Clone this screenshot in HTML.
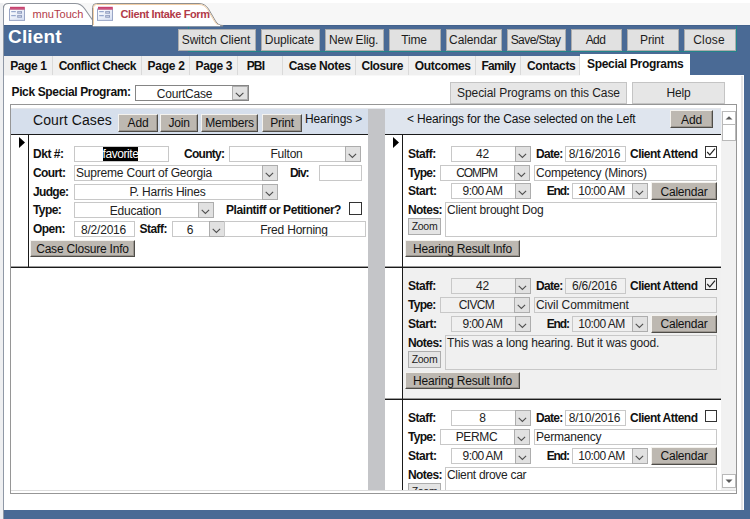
<!DOCTYPE html>
<html><head><meta charset="utf-8"><title>Client Intake Form</title>
<style>
html,body{margin:0;padding:0;}
body{width:750px;height:519px;overflow:hidden;position:relative;background:#f0f0f0;font-family:"Liberation Sans",Arial,sans-serif;font-size:12px;color:#000;}
.a{position:absolute;box-sizing:border-box;white-space:nowrap;}
.f{display:inline-block;}
.lbl{font-weight:bold;font-size:12px;line-height:14px;color:#111;letter-spacing:-0.45px;}
.txt{font-size:12px;line-height:14px;color:#111;letter-spacing:-0.2px;}
.big{font-size:14px;line-height:18px;color:#111;}
.title{font-weight:bold;font-size:19px;line-height:26px;color:#fff;}
.doctab{font-size:11px;line-height:14px;color:#b23a48;z-index:3;}
.hbtn{background:#e1e1e1;border:1px solid #adadad;text-align:center;font-size:12px;color:#1c1c1c;padding-right:2px;}
.hbtn2{background:#e6e6e6;border:1px solid #c4c4c4;text-align:center;font-size:12px;color:#1c1c1c;letter-spacing:-0.2px;}
.btn{background:#bdb8b1;border:1px solid;border-color:#f4f2ee #4e4c48 #4e4c48 #f4f2ee;box-shadow:inset -1px -1px 0 #9b968f;text-align:center;font-size:12px;color:#111;letter-spacing:-0.2px;}
.zbtn{background:#e4e4e4;border:1px solid #adadad;text-align:center;font-size:10.5px;color:#222;}
.tb{border:1px solid #c8c8c8;font-size:12px;line-height:15px;color:#222;overflow:hidden;padding:0 1px;letter-spacing:-0.2px;}
.dd{background:#e1e1e1;border:1px solid #adadad;}
.dd svg{position:absolute;left:-1px;top:-1px;}
.hl{background:#000;color:#fff;padding:0;letter-spacing:-0.45px;}
.chk{border:1px solid #333;}
.sbb{background:#fff;border:1px solid #b9b9b9;}
.sbb svg{position:absolute;left:0;top:0;}
</style></head>
<body>
<div class="a " style="left:0px;top:0px;width:750px;height:25px;background:#f7f7f7;"></div>
<div class="a " style="left:0px;top:0px;width:750px;height:3px;background:#fff;"></div>
<svg class="a" style="left:0;top:0;z-index:2" width="260" height="27" viewBox="0 0 260 27">
<path d="M4 25 V7.5 Q4 3.5 8.5 3.5 H75 Q81 3.5 84.5 8.5 L93 21 V25 Z" fill="#fff"/>
<path d="M3.5 8 Q3.5 3.5 8.5 3.5 H75 Q81 3.5 84.5 8.5 L92.5 20" fill="none" stroke="#8f949c" stroke-width="1.1"/>
<path d="M92.5 26 V7.5 Q92.5 3.5 96.5 3.5 H199 Q205 3.5 208.5 9 L215.5 21 Q218 25.5 223 25.5 V26 Z" fill="#fff" stroke="#8f8f8f" stroke-width="1"/>
<path d="M93.5 26 V7.5 Q93.5 4.5 96.5 4.5 H199 Q204.5 4.5 207.6 9.5 L214.6 21.5 Q216 24 218 25" fill="none" stroke="#f3cfa6" stroke-width="1"/>
<rect x="93" y="25" width="127" height="1.2" fill="#fff"/>
</svg>
<svg class="a" style="left:9px;top:6px;z-index:3" width="16" height="15" viewBox="0 0 16 15">
<defs><linearGradient id="g9" x1="0" y1="0" x2="1" y2="1"><stop offset="0" stop-color="#fff"/><stop offset="1" stop-color="#d5def2"/></linearGradient></defs>
<rect x="0.5" y="3" width="15" height="11.4" fill="url(#g9)" stroke="#9aa6c6" stroke-width="1"/>
<rect x="1" y="0.8" width="14.8" height="2.7" fill="#c7426f"/>
<rect x="1" y="2.6" width="14.8" height="0.9" fill="#d56f92"/>
<rect x="2.2" y="5.1" width="4.6" height="1.1" fill="#8da0c8"/><rect x="2.2" y="9.1" width="4.6" height="1.1" fill="#8da0c8"/>
<rect x="8.2" y="5.1" width="4.8" height="2.6" fill="#8f9cbe"/><rect x="9.2" y="5.9" width="2.8" height="1" fill="#c4cde2"/>
<rect x="8.2" y="9.1" width="4.8" height="2.6" fill="#8f9cbe"/><rect x="9.2" y="9.9" width="2.8" height="1" fill="#c4cde2"/>
</svg>
<svg class="a" style="left:97px;top:6px;z-index:3" width="16" height="15" viewBox="0 0 16 15">
<defs><linearGradient id="g97" x1="0" y1="0" x2="1" y2="1"><stop offset="0" stop-color="#fff"/><stop offset="1" stop-color="#d5def2"/></linearGradient></defs>
<rect x="0.5" y="3" width="15" height="11.4" fill="url(#g97)" stroke="#9aa6c6" stroke-width="1"/>
<rect x="1" y="0.8" width="14.8" height="2.7" fill="#c7426f"/>
<rect x="1" y="2.6" width="14.8" height="0.9" fill="#d56f92"/>
<rect x="2.2" y="5.1" width="4.6" height="1.1" fill="#8da0c8"/><rect x="2.2" y="9.1" width="4.6" height="1.1" fill="#8da0c8"/>
<rect x="8.2" y="5.1" width="4.8" height="2.6" fill="#8f9cbe"/><rect x="9.2" y="5.9" width="2.8" height="1" fill="#c4cde2"/>
<rect x="8.2" y="9.1" width="4.8" height="2.6" fill="#8f9cbe"/><rect x="9.2" y="9.9" width="2.8" height="1" fill="#c4cde2"/>
</svg>
<div class="a doctab" style="left:32.5px;top:7px;"><span class="f " style="letter-spacing:0.03px">mnuTouch</span></div>
<div class="a doctab" style="left:120.5px;top:7px;font-weight:bold;"><span class="f " style="letter-spacing:-0.38px">Client Intake Form</span></div>
<div class="a " style="left:4px;top:25px;width:746px;height:494px;background:#4a6a95;"></div>
<div class="a " style="left:0px;top:3px;width:3px;height:516px;background:#eeeff1;"></div>
<div class="a " style="left:3px;top:6px;width:1px;height:513px;background:#8f98a6;"></div>
<div class="a title" style="left:8px;top:24px;"><span class="f " style="letter-spacing:0.16px">Client</span></div>
<div class="a " style="left:188px;top:26px;width:549px;height:26px;border:1px solid #23858a;border-top:none;"></div>
<div class="a " style="left:4px;top:25px;width:746px;height:1px;background:#43628c;"></div>
<div class="a hbtn" style="left:178px;top:29px;width:78px;height:22px;line-height:20px;"><span class="f " style="letter-spacing:-0.08px">Switch Client</span></div>
<div class="a hbtn" style="left:261px;top:29px;width:59px;height:22px;line-height:20px;"><span class="f " style="letter-spacing:-0.07px">Duplicate</span></div>
<div class="a hbtn" style="left:325px;top:29px;width:59px;height:22px;line-height:20px;"><span class="f " style="letter-spacing:-0.17px">New Elig.</span></div>
<div class="a hbtn" style="left:389px;top:29px;width:52px;height:22px;line-height:20px;"><span class="f " style="letter-spacing:-0.14px">Time</span></div>
<div class="a hbtn" style="left:446px;top:29px;width:56px;height:22px;line-height:20px;"><span class="f " style="letter-spacing:-0.11px">Calendar</span></div>
<div class="a hbtn" style="left:507px;top:29px;width:59px;height:22px;line-height:20px;"><span class="f " style="letter-spacing:-0.55px">Save/Stay</span></div>
<div class="a hbtn" style="left:571px;top:29px;width:51px;height:22px;line-height:20px;"><span class="f " style="letter-spacing:-0.58px">Add</span></div>
<div class="a hbtn" style="left:627px;top:29px;width:52px;height:22px;line-height:20px;"><span class="f " style="letter-spacing:-0.17px">Print</span></div>
<div class="a hbtn" style="left:684px;top:29px;width:52px;height:22px;line-height:20px;"><span class="f " style="letter-spacing:0.18px">Close</span></div>
<div class="a " style="left:4px;top:56px;width:686px;height:20px;background:#f0f0f0;"></div>
<div class="a " style="left:4px;top:75px;width:686px;height:1px;background:#f8f8f8;"></div>
<div class="a " style="left:52px;top:56px;width:1px;height:19px;background:#dadada;"></div>
<div class="a " style="left:141px;top:56px;width:1px;height:19px;background:#dadada;"></div>
<div class="a " style="left:189px;top:56px;width:1px;height:19px;background:#dadada;"></div>
<div class="a " style="left:237px;top:56px;width:1px;height:19px;background:#dadada;"></div>
<div class="a " style="left:282px;top:56px;width:1px;height:19px;background:#dadada;"></div>
<div class="a " style="left:355px;top:56px;width:1px;height:19px;background:#dadada;"></div>
<div class="a " style="left:408px;top:56px;width:1px;height:19px;background:#dadada;"></div>
<div class="a " style="left:475px;top:56px;width:1px;height:19px;background:#dadada;"></div>
<div class="a " style="left:520px;top:56px;width:1px;height:19px;background:#dadada;"></div>
<div class="a " style="left:579px;top:56px;width:1px;height:19px;background:#dadada;"></div>
<div class="a lbl" style="left:10.2px;top:59px;"><span class="f " style="letter-spacing:-0.40px">Page 1</span></div>
<div class="a lbl" style="left:58.7px;top:59px;"><span class="f " style="letter-spacing:-0.48px">Conflict Check</span></div>
<div class="a lbl" style="left:147.5px;top:59px;"><span class="f " style="letter-spacing:-0.24px">Page 2</span></div>
<div class="a lbl" style="left:195.5px;top:59px;"><span class="f " style="letter-spacing:-0.34px">Page 3</span></div>
<div class="a lbl" style="left:246.7px;top:59px;"><span class="f " style="letter-spacing:-0.86px">PBI</span></div>
<div class="a lbl" style="left:288.8px;top:59px;"><span class="f " style="letter-spacing:-0.36px">Case Notes</span></div>
<div class="a lbl" style="left:361.5px;top:59px;"><span class="f " style="letter-spacing:-0.45px">Closure</span></div>
<div class="a lbl" style="left:414.8px;top:59px;"><span class="f " style="letter-spacing:-0.36px">Outcomes</span></div>
<div class="a lbl" style="left:481.5px;top:59px;"><span class="f " style="letter-spacing:-0.74px">Family</span></div>
<div class="a lbl" style="left:527.0px;top:59px;"><span class="f " style="letter-spacing:-0.38px">Contacts</span></div>
<div class="a " style="left:4px;top:76px;width:740px;height:434px;background:#fff;"></div>
<div class="a " style="left:690px;top:75px;width:54px;height:1px;background:#fff;"></div>
<div class="a " style="left:741px;top:76px;width:2px;height:434px;background:#e6e6e6;"></div>
<div class="a " style="left:580px;top:54px;width:110px;height:22px;background:#fff;"></div>
<div class="a lbl" style="left:587px;top:57px;"><span class="f " style="letter-spacing:-0.31px">Special Programs</span></div>
<div class="a lbl" style="left:11.5px;top:85px;"><span class="f " style="letter-spacing:-0.36px">Pick Special Program:</span></div>
<div class="a tb" style="left:135px;top:85px;width:114px;height:16px;text-align:center;padding-right:16px;padding-top:1px;border-color:#858585;"><span>CourtCase</span></div>
<div class="a dd" style="left:232px;top:86px;width:16px;height:14px;"><svg width="16" height="14" viewBox="0 0 16 14"><path d="M3.8 6.8 L7.6 10.4 L11.4 6.8" fill="none" stroke="#4a4a4a" stroke-width="1.1"/></svg></div>
<div class="a hbtn2" style="left:450px;top:82px;width:177px;height:22px;line-height:20px;"><span class="f " style="letter-spacing:-0.06px">Special Programs on this Case</span></div>
<div class="a hbtn2" style="left:632px;top:82px;width:93px;height:22px;line-height:20px;">Help</div>
<div class="a " style="left:10px;top:104px;width:727px;height:390px;border:1px solid #969696;background:#fff;"></div>
<div class="a " style="left:11px;top:490px;width:725px;height:1px;background:#dcdcdc;"></div>
<div class="a " style="left:11px;top:108px;width:725px;height:1px;background:#e4e6ea;"></div>
<div class="a " style="left:11px;top:109px;width:358px;height:25px;background:#d6dfec;"></div>
<div class="a " style="left:11px;top:134px;width:358px;height:1px;background:#1a1a1a;"></div>
<div class="a big" style="left:33px;top:111px;"><span class="f " style="letter-spacing:0.10px">Court Cases</span></div>
<div class="a btn" style="left:118px;top:114px;width:40px;height:18px;line-height:17px;">Add</div>
<div class="a btn" style="left:160px;top:114px;width:38px;height:18px;line-height:17px;">Join</div>
<div class="a btn" style="left:201px;top:114px;width:57px;height:18px;line-height:17px;">Members</div>
<div class="a btn" style="left:262px;top:114px;width:40px;height:18px;line-height:17px;">Print</div>
<div class="a txt" style="left:305px;top:112px;"><span class="f " style="letter-spacing:-0.12px">Hearings &gt;</span></div>
<svg class="a" style="left:19px;top:137px" width="6" height="11" viewBox="0 0 6 11"><path d="M0 0 L6 5.5 L0 11 Z" fill="#000"/></svg>
<div class="a " style="left:28px;top:135px;width:1px;height:133px;background:#1a1a1a;"></div>
<div class="a " style="left:11px;top:266px;width:358px;height:1px;background:rgba(40,40,40,0.45);"></div>
<div class="a " style="left:11px;top:267px;width:358px;height:1px;background:#1a1a1a;"></div>
<div class="a lbl" style="left:33px;top:147px;"><span class="f " style="letter-spacing:-0.47px">Dkt #:</span></div>
<div class="a tb" style="left:74px;top:146px;width:95px;height:16px;text-align:center;background:#fff;padding-right:3px;"><span><span class="hl">favorite</span></span></div>
<div class="a lbl" style="left:184px;top:147px;"><span class="f " style="letter-spacing:-0.72px">County:</span></div>
<div class="a tb" style="left:229px;top:146px;width:132px;height:16px;text-align:center;padding-right:18px;background:#fff;padding-top:0px;"><span>Fulton</span></div><div class="a dd" style="left:345px;top:146px;width:16px;height:16px;"><svg width="16" height="16" viewBox="0 0 16 16"><path d="M3.7 7.8 L7.4 11.5 L11.1 7.8" fill="none" stroke="#505050" stroke-width="1.1"/></svg></div>
<div class="a lbl" style="left:33px;top:166px;"><span class="f " style="letter-spacing:-0.60px">Court:</span></div>
<div class="a tb" style="left:74px;top:165px;width:204px;height:16px;text-align:left;padding-right:16px;background:#fff;padding-top:0px;"><span>Supreme Court of Georgia</span></div><div class="a dd" style="left:262px;top:165px;width:16px;height:16px;"><svg width="16" height="16" viewBox="0 0 16 16"><path d="M3.7 7.8 L7.4 11.5 L11.1 7.8" fill="none" stroke="#505050" stroke-width="1.1"/></svg></div>
<div class="a lbl" style="left:290px;top:166px;"><span class="f " style="letter-spacing:-1.06px">Div:</span></div>
<div class="a tb" style="left:319px;top:165px;width:43px;height:16px;text-align:center;background:#fff;padding-right:3px;"><span></span></div>
<div class="a lbl" style="left:33px;top:185px;"><span class="f " style="letter-spacing:-0.67px">Judge:</span></div>
<div class="a tb" style="left:74px;top:184px;width:204px;height:16px;text-align:center;padding-right:18px;background:#fff;padding-top:0px;"><span>P. Harris Hines</span></div><div class="a dd" style="left:262px;top:184px;width:16px;height:16px;"><svg width="16" height="16" viewBox="0 0 16 16"><path d="M3.7 7.8 L7.4 11.5 L11.1 7.8" fill="none" stroke="#505050" stroke-width="1.1"/></svg></div>
<div class="a lbl" style="left:33px;top:203px;"><span class="f " style="letter-spacing:-0.59px">Type:</span></div>
<div class="a tb" style="left:74px;top:202px;width:140px;height:16px;text-align:center;padding-right:18px;background:#fff;padding-top:1px;"><span>Education</span></div><div class="a dd" style="left:198px;top:202px;width:16px;height:16px;"><svg width="16" height="16" viewBox="0 0 16 16"><path d="M3.7 7.8 L7.4 11.5 L11.1 7.8" fill="none" stroke="#505050" stroke-width="1.1"/></svg></div>
<div class="a lbl" style="left:226px;top:203px;"><span class="f " style="letter-spacing:-0.43px">Plaintiff or Petitioner?</span></div>
<div class="a chk" style="left:349px;top:202px;width:13px;height:13px;background:#fff;"></div>
<div class="a lbl" style="left:33px;top:222px;"><span class="f " style="letter-spacing:-0.54px">Open:</span></div>
<div class="a tb" style="left:74px;top:221px;width:61px;height:16px;text-align:center;background:#fff;padding-right:3px;padding-top:1px;"><span>8/2/2016</span></div>
<div class="a lbl" style="left:139.5px;top:222px;"><span class="f " style="letter-spacing:-0.53px">Staff:</span></div>
<div class="a tb" style="left:172px;top:221px;width:53px;height:16px;text-align:center;padding-right:18px;background:#fff;padding-top:1px;"><span>6</span></div><div class="a dd" style="left:209px;top:221px;width:16px;height:16px;"><svg width="16" height="16" viewBox="0 0 16 16"><path d="M3.7 7.8 L7.4 11.5 L11.1 7.8" fill="none" stroke="#505050" stroke-width="1.1"/></svg></div>
<div class="a tb" style="left:224px;top:221px;width:142px;height:16px;text-align:center;background:#fff;padding-right:3px;padding-top:1px;"><span>Fred Horning</span></div>
<div class="a btn" style="left:30px;top:240px;width:105px;height:17px;line-height:16px;">Case Closure Info</div>
<div class="a " style="left:368px;top:109px;width:17px;height:381px;background:#c4c5c8;"></div>
<div class="a " style="left:385px;top:109px;width:336px;height:25px;background:#dfe5ee;"></div>
<div class="a " style="left:385px;top:134px;width:336px;height:1px;background:#1a1a1a;"></div>
<div class="a txt" style="left:407px;top:112px;"><span class="f " style="letter-spacing:-0.15px">&lt; Hearings for the Case selected on the Left</span></div>
<div class="a btn" style="left:670px;top:110px;width:43px;height:18px;line-height:18px;">Add</div>
<svg class="a" style="left:393px;top:137px" width="6" height="11" viewBox="0 0 6 11"><path d="M0 0 L6 5.5 L0 11 Z" fill="#000"/></svg>
<div class="a" style="left:0;top:135px;width:750px;height:132px;overflow:hidden"><div class="a" style="left:0;top:0"><div class="a " style="left:403px;top:0px;width:318px;height:132px;background:#fff;"></div><div class="a " style="left:402px;top:0px;width:1px;height:132px;background:#1a1a1a;"></div><div class="a lbl" style="left:408px;top:12px;"><span class="f " style="letter-spacing:-0.48px">Staff:</span></div><div class="a tb" style="left:451px;top:11px;width:80px;height:16px;text-align:center;padding-right:18px;background:#fff;padding-top:0px;"><span>42</span></div><div class="a dd" style="left:515px;top:11px;width:16px;height:16px;"><svg width="16" height="16" viewBox="0 0 16 16"><path d="M3.7 7.8 L7.4 11.5 L11.1 7.8" fill="none" stroke="#505050" stroke-width="1.1"/></svg></div><div class="a lbl" style="left:536px;top:12px;"><span class="f " style="letter-spacing:-0.69px">Date:</span></div><div class="a tb" style="left:565px;top:11px;width:61px;height:16px;text-align:center;background:#fff;padding-right:3px;"><span>8/16/2016</span></div><div class="a lbl" style="left:630px;top:12px;"><span class="f " style="letter-spacing:-0.52px">Client Attend</span></div><div class="a chk" style="left:705px;top:11px;width:12px;height:12px;background:#fff;"><svg width="12" height="12" viewBox="0 0 12 12" style="position:absolute;left:-1px;top:-1px"><path d="M2.2 6 L4.8 8.8 L10 2.6" fill="none" stroke="#222" stroke-width="1.2"/></svg></div><div class="a lbl" style="left:408px;top:31px;"><span class="f " style="letter-spacing:-0.72px">Type:</span></div><div class="a tb" style="left:440px;top:30px;width:90px;height:16px;text-align:center;padding-right:18px;background:#fff;padding-top:0px;"><span><span class="f " style="letter-spacing:-1.05px">COMPM</span></span></div><div class="a dd" style="left:514px;top:30px;width:16px;height:16px;"><svg width="16" height="16" viewBox="0 0 16 16"><path d="M3.7 7.8 L7.4 11.5 L11.1 7.8" fill="none" stroke="#505050" stroke-width="1.1"/></svg></div><div class="a tb" style="left:534px;top:30px;width:183px;height:16px;text-align:left;background:#fff;padding-right:1px;"><span>Competency (Minors)</span></div><div class="a lbl" style="left:408px;top:49px;"><span class="f " style="letter-spacing:-0.47px">Start:</span></div><div class="a tb" style="left:451px;top:48px;width:80px;height:16px;text-align:center;padding-right:18px;background:#fff;padding-top:0px;"><span><span class="f " style="letter-spacing:-0.61px">9:00 AM</span></span></div><div class="a dd" style="left:515px;top:48px;width:16px;height:16px;"><svg width="16" height="16" viewBox="0 0 16 16"><path d="M3.7 7.8 L7.4 11.5 L11.1 7.8" fill="none" stroke="#505050" stroke-width="1.1"/></svg></div><div class="a lbl" style="left:546.75px;top:49px;"><span class="f " style="letter-spacing:-1.14px">End:</span></div><div class="a tb" style="left:572px;top:48px;width:76px;height:16px;text-align:center;padding-right:18px;background:#fff;padding-top:0px;"><span><span class="f " style="letter-spacing:-0.53px">10:00 AM</span></span></div><div class="a dd" style="left:632px;top:48px;width:16px;height:16px;"><svg width="16" height="16" viewBox="0 0 16 16"><path d="M3.7 7.8 L7.4 11.5 L11.1 7.8" fill="none" stroke="#505050" stroke-width="1.1"/></svg></div><div class="a btn" style="left:651px;top:47px;width:66px;height:18px;line-height:19px;">Calendar</div><div class="a lbl" style="left:408px;top:68px;"><span class="f " style="letter-spacing:-0.57px">Notes:</span></div><div class="a tb" style="left:445px;top:67px;width:272px;height:35px;text-align:left;background:#fff;padding-right:1px;line-height:15px;"><span>Client brought Dog</span></div><div class="a zbtn" style="left:408px;top:83px;width:33px;height:17px;line-height:15px;"><span class="f " style="letter-spacing:-0.28px">Zoom</span></div><div class="a btn" style="left:405px;top:105px;width:115px;height:17px;line-height:16px;">Hearing Result Info</div></div></div>
<div class="a" style="left:0;top:267px;width:750px;height:132px;overflow:hidden"><div class="a" style="left:0;top:0"><div class="a " style="left:403px;top:0px;width:318px;height:132px;background:#f0f0f0;"></div><div class="a " style="left:402px;top:0px;width:1px;height:132px;background:#1a1a1a;"></div><div class="a lbl" style="left:408px;top:12px;"><span class="f " style="letter-spacing:-0.48px">Staff:</span></div><div class="a tb" style="left:451px;top:11px;width:80px;height:16px;text-align:center;padding-right:18px;background:#f0f0f0;padding-top:0px;"><span>42</span></div><div class="a dd" style="left:515px;top:11px;width:16px;height:16px;"><svg width="16" height="16" viewBox="0 0 16 16"><path d="M3.7 7.8 L7.4 11.5 L11.1 7.8" fill="none" stroke="#505050" stroke-width="1.1"/></svg></div><div class="a lbl" style="left:536px;top:12px;"><span class="f " style="letter-spacing:-0.69px">Date:</span></div><div class="a tb" style="left:565px;top:11px;width:61px;height:16px;text-align:center;background:#f0f0f0;padding-right:3px;"><span>6/6/2016</span></div><div class="a lbl" style="left:630px;top:12px;"><span class="f " style="letter-spacing:-0.52px">Client Attend</span></div><div class="a chk" style="left:705px;top:11px;width:12px;height:12px;background:#f0f0f0;"><svg width="12" height="12" viewBox="0 0 12 12" style="position:absolute;left:-1px;top:-1px"><path d="M2.2 6 L4.8 8.8 L10 2.6" fill="none" stroke="#222" stroke-width="1.2"/></svg></div><div class="a lbl" style="left:408px;top:31px;"><span class="f " style="letter-spacing:-0.72px">Type:</span></div><div class="a tb" style="left:440px;top:30px;width:90px;height:16px;text-align:center;padding-right:18px;background:#f0f0f0;padding-top:0px;"><span><span class="f " style="letter-spacing:-0.67px">CIVCM</span></span></div><div class="a dd" style="left:514px;top:30px;width:16px;height:16px;"><svg width="16" height="16" viewBox="0 0 16 16"><path d="M3.7 7.8 L7.4 11.5 L11.1 7.8" fill="none" stroke="#505050" stroke-width="1.1"/></svg></div><div class="a tb" style="left:534px;top:30px;width:183px;height:16px;text-align:left;background:#f0f0f0;padding-right:1px;"><span><span class="f " style="letter-spacing:-0.07px">Civil Commitment</span></span></div><div class="a lbl" style="left:408px;top:50px;"><span class="f " style="letter-spacing:-0.47px">Start:</span></div><div class="a tb" style="left:451px;top:49px;width:80px;height:16px;text-align:center;padding-right:18px;background:#f0f0f0;padding-top:0px;"><span><span class="f " style="letter-spacing:-0.61px">9:00 AM</span></span></div><div class="a dd" style="left:515px;top:49px;width:16px;height:16px;"><svg width="16" height="16" viewBox="0 0 16 16"><path d="M3.7 7.8 L7.4 11.5 L11.1 7.8" fill="none" stroke="#505050" stroke-width="1.1"/></svg></div><div class="a lbl" style="left:546.75px;top:50px;"><span class="f " style="letter-spacing:-1.14px">End:</span></div><div class="a tb" style="left:572px;top:49px;width:76px;height:16px;text-align:center;padding-right:18px;background:#f0f0f0;padding-top:0px;"><span><span class="f " style="letter-spacing:-0.53px">10:00 AM</span></span></div><div class="a dd" style="left:632px;top:49px;width:16px;height:16px;"><svg width="16" height="16" viewBox="0 0 16 16"><path d="M3.7 7.8 L7.4 11.5 L11.1 7.8" fill="none" stroke="#505050" stroke-width="1.1"/></svg></div><div class="a btn" style="left:651px;top:48px;width:66px;height:18px;line-height:17px;">Calendar</div><div class="a lbl" style="left:408px;top:69px;"><span class="f " style="letter-spacing:-0.57px">Notes:</span></div><div class="a tb" style="left:445px;top:68px;width:272px;height:35px;text-align:left;background:#f0f0f0;padding-right:1px;line-height:15px;"><span><span class="f " style="letter-spacing:-0.16px">This was a long hearing. But it was good.</span></span></div><div class="a zbtn" style="left:408px;top:84px;width:33px;height:17px;line-height:15px;"><span class="f " style="letter-spacing:-0.28px">Zoom</span></div><div class="a btn" style="left:405px;top:105px;width:115px;height:17px;line-height:16px;">Hearing Result Info</div></div></div>
<div class="a" style="left:0;top:399px;width:750px;height:91px;overflow:hidden"><div class="a" style="left:0;top:0"><div class="a " style="left:403px;top:0px;width:318px;height:132px;background:#fff;"></div><div class="a " style="left:402px;top:0px;width:1px;height:132px;background:#1a1a1a;"></div><div class="a lbl" style="left:408px;top:12px;"><span class="f " style="letter-spacing:-0.48px">Staff:</span></div><div class="a tb" style="left:451px;top:11px;width:80px;height:16px;text-align:center;padding-right:18px;background:#fff;padding-top:0px;"><span>8</span></div><div class="a dd" style="left:515px;top:11px;width:16px;height:16px;"><svg width="16" height="16" viewBox="0 0 16 16"><path d="M3.7 7.8 L7.4 11.5 L11.1 7.8" fill="none" stroke="#505050" stroke-width="1.1"/></svg></div><div class="a lbl" style="left:536px;top:12px;"><span class="f " style="letter-spacing:-0.69px">Date:</span></div><div class="a tb" style="left:565px;top:11px;width:61px;height:16px;text-align:center;background:#fff;padding-right:3px;"><span>8/10/2016</span></div><div class="a lbl" style="left:630px;top:12px;"><span class="f " style="letter-spacing:-0.52px">Client Attend</span></div><div class="a chk" style="left:705px;top:11px;width:12px;height:12px;background:#fff;"></div><div class="a lbl" style="left:408px;top:31px;"><span class="f " style="letter-spacing:-0.72px">Type:</span></div><div class="a tb" style="left:440px;top:30px;width:90px;height:16px;text-align:center;padding-right:18px;background:#fff;padding-top:0px;"><span><span class="f " style="letter-spacing:-0.34px">PERMC</span></span></div><div class="a dd" style="left:514px;top:30px;width:16px;height:16px;"><svg width="16" height="16" viewBox="0 0 16 16"><path d="M3.7 7.8 L7.4 11.5 L11.1 7.8" fill="none" stroke="#505050" stroke-width="1.1"/></svg></div><div class="a tb" style="left:534px;top:30px;width:183px;height:16px;text-align:left;background:#fff;padding-right:1px;"><span>Permanency</span></div><div class="a lbl" style="left:408px;top:50px;"><span class="f " style="letter-spacing:-0.47px">Start:</span></div><div class="a tb" style="left:451px;top:49px;width:80px;height:16px;text-align:center;padding-right:18px;background:#fff;padding-top:0px;"><span><span class="f " style="letter-spacing:-0.61px">9:00 AM</span></span></div><div class="a dd" style="left:515px;top:49px;width:16px;height:16px;"><svg width="16" height="16" viewBox="0 0 16 16"><path d="M3.7 7.8 L7.4 11.5 L11.1 7.8" fill="none" stroke="#505050" stroke-width="1.1"/></svg></div><div class="a lbl" style="left:546.75px;top:50px;"><span class="f " style="letter-spacing:-1.14px">End:</span></div><div class="a tb" style="left:572px;top:49px;width:76px;height:16px;text-align:center;padding-right:18px;background:#fff;padding-top:0px;"><span><span class="f " style="letter-spacing:-0.53px">10:00 AM</span></span></div><div class="a dd" style="left:632px;top:49px;width:16px;height:16px;"><svg width="16" height="16" viewBox="0 0 16 16"><path d="M3.7 7.8 L7.4 11.5 L11.1 7.8" fill="none" stroke="#505050" stroke-width="1.1"/></svg></div><div class="a btn" style="left:651px;top:48px;width:66px;height:18px;line-height:17px;">Calendar</div><div class="a lbl" style="left:408px;top:69px;"><span class="f " style="letter-spacing:-0.57px">Notes:</span></div><div class="a tb" style="left:445px;top:68px;width:272px;height:35px;text-align:left;background:#fff;padding-right:1px;line-height:15px;"><span><span class="f " style="letter-spacing:-0.30px">Client drove car</span></span></div><div class="a zbtn" style="left:408px;top:84px;width:33px;height:17px;line-height:15px;"><span class="f " style="letter-spacing:-0.28px">Zoom</span></div><div class="a btn" style="left:405px;top:105px;width:115px;height:17px;line-height:16px;">Hearing Result Info</div></div></div>
<div class="a " style="left:385px;top:266px;width:336px;height:1px;background:rgba(40,40,40,0.45);"></div>
<div class="a " style="left:385px;top:267px;width:336px;height:1px;background:#1a1a1a;"></div>
<div class="a " style="left:385px;top:398px;width:336px;height:1px;background:rgba(40,40,40,0.45);"></div>
<div class="a " style="left:385px;top:399px;width:336px;height:1px;background:#1a1a1a;"></div>
<div class="a " style="left:721px;top:108px;width:15px;height:382px;background:#f1f1f1;"></div>
<div class="a " style="left:721px;top:108px;width:15px;height:3px;background:#fff;"></div>
<div class="a sbb" style="left:722px;top:111px;width:14px;height:14px;"><svg width="13" height="13" viewBox="0 0 13 13"><path d="M2.5 7.6 L6 4.2 L9.5 7.6 Z" fill="#5c5c5c"/></svg></div>
<div class="a sbb" style="left:722px;top:124px;width:14px;height:17px;"></div>
<div class="a sbb" style="left:722px;top:474px;width:14px;height:14px;"><svg width="13" height="13" viewBox="0 0 13 13"><path d="M2.5 4.6 L6 8 L9.5 4.6 Z" fill="#5c5c5c"/></svg></div>
</body></html>
